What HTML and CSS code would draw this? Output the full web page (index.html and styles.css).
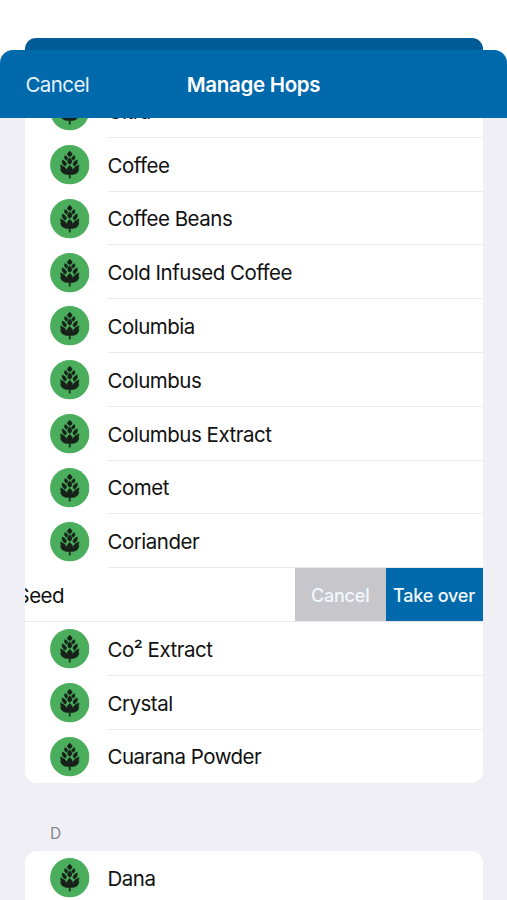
FILE: index.html
```html
<!DOCTYPE html>
<html lang="en">
<head>
<meta charset="utf-8">
<title>Manage Hops</title>
<link rel="stylesheet" href="styles.css">
</head>
<body>
<svg class="defs" width="0" height="0" aria-hidden="true">
  <symbol id="hop" viewBox="-20 -20 40 40">
    <circle r="19.9" fill="#4aae5c"/>
    <g fill="#17211a" stroke="#17211a" stroke-width=".45">
      <path d="M0-13.6C1.6-12.5 2.4-11.3 2.4-10.3Q2-8.7 0-8.1Q-2-8.7-2.4-10.3C-2.4-11.3-1.6-12.5 0-13.6Z"/>
      <path d="M0-7C1.6-5.7 2.4-4.2 2.2-2.9Q1.7-1.2 0-.4Q-1.7-1.2-2.2-2.9C-2.4-4.2-1.6-5.7 0-7Z"/>
      <path d="M-5-9.3Q-2.8-8.5-1.8-7Q-2.3-5.3-3.5-4.4Q-6.3-6.2-5-9.3Z"/>
      <path d="M-7.6-5Q-4.6-3.7-3.2-1.2Q-3.2.5-4.3 1.4Q-8.6-.4-7.6-5Z"/>
      <path d="M-9.4 0Q-5 1.5-3.4 4.6L-3.5 6Q-9.6 6-9.4 0Z"/>
      <path d="M5-9.3Q2.8-8.5 1.8-7Q2.3-5.3 3.5-4.4Q6.3-6.2 5-9.3Z"/>
      <path d="M7.6-5Q4.6-3.7 3.2-1.2Q3.2.5 4.3 1.4Q8.6-.4 7.6-5Z"/>
      <path d="M9.4 0Q5 1.5 3.4 4.6L3.5 6Q9.6 6 9.4 0Z"/>
      <path d="M0 .6Q3.2 3 2.7 5.6Q6 3.9 9.4 4Q8.8 9 3.5 9.8Q1.8 10.1.6 9.8V13.6H-.6V9.8Q-1.8 10.1-3.5 9.8Q-8.8 9-9.4 4Q-6 3.9-2.7 5.6Q-3.2 3 0 .6Z"/>
    </g>
  </symbol>
</svg>
<div class="backdrop-sheet"></div>
<div class="sheet">
  <header class="navbar">
    <span class="nav-cancel">Cancel</span>
    <h1 class="nav-title">Manage Hops</h1>
    <span></span>
  </header>
  <main class="content">
    <ul class="group group-c">
      <li class="row"><svg class="icon"><use href="#hop"/></svg><span class="label">Citra</span></li>
      <li class="row"><svg class="icon"><use href="#hop"/></svg><span class="label">Coffee</span></li>
      <li class="row"><svg class="icon"><use href="#hop"/></svg><span class="label">Coffee Beans</span></li>
      <li class="row"><svg class="icon"><use href="#hop"/></svg><span class="label">Cold Infused Coffee</span></li>
      <li class="row"><svg class="icon"><use href="#hop"/></svg><span class="label">Columbia</span></li>
      <li class="row"><svg class="icon"><use href="#hop"/></svg><span class="label">Columbus</span></li>
      <li class="row"><svg class="icon"><use href="#hop"/></svg><span class="label">Columbus Extract</span></li>
      <li class="row"><svg class="icon"><use href="#hop"/></svg><span class="label">Comet</span></li>
      <li class="row"><svg class="icon"><use href="#hop"/></svg><span class="label">Coriander</span></li>
      <li class="row swiped">
        <span class="swiped-label"><span>Seed</span></span>
        <span class="action action-cancel">Cancel</span>
        <span class="action action-take">Take over</span>
      </li>
      <li class="row"><svg class="icon"><use href="#hop"/></svg><span class="label">Co² Extract</span></li>
      <li class="row"><svg class="icon"><use href="#hop"/></svg><span class="label">Crystal</span></li>
      <li class="row"><svg class="icon"><use href="#hop"/></svg><span class="label">Cuarana Powder</span></li>
    </ul>
    <h2 class="section">D</h2>
    <ul class="group group-d">
      <li class="row"><svg class="icon"><use href="#hop"/></svg><span class="label">Dana</span></li>
    </ul>
  </main>
</div>
</body>
</html>
```
FILE: styles.css
```css
* { box-sizing: border-box; }
body {
  margin: 0;
  height: 900px;
  padding-top: 38px;
  overflow: hidden;
  display: flex;
  flex-direction: column;
  background: #fff;
  color: #111;
  font-family: Inter, "Liberation Sans", sans-serif;
  font-size: 20.5px;
  letter-spacing: -0.5px;
}
.defs { position: absolute; }
.backdrop-sheet {
  flex: none;
  height: 12px;
  margin: 0 24.5px;
  border-radius: 11px 11px 0 0;
  background: #005b96;
}
.sheet {
  flex: 1;
  min-height: 0;
  display: flex;
  flex-direction: column;
  border-radius: 13px 13px 0 0;
  overflow: hidden;
  background: #f0eff5;
}
.navbar {
  flex: none;
  height: 68.4px;
  padding: 0 25.5px;
  display: grid;
  grid-template-columns: 1fr auto 1fr;
  align-items: center;
  background: #0069ac;
  color: #fff;
}
.nav-cancel { color: #e6f3fc; letter-spacing: -0.6px; }
.nav-title { margin: 0; font-size: 20.5px; font-weight: 600; letter-spacing: -0.3px; }
.content { flex: 1; min-height: 0; overflow: hidden; padding: 0 24.5px 0 25px; }
.group {
  margin: 0;
  padding: 0;
  list-style: none;
  overflow: hidden;
  border-radius: 12px;
  background: #fff;
}
.group-c { margin-top: -34.4px; }
.group-d { border-radius: 12px 12px 0 0; }
.row {
  height: 53.8px;
  padding-left: 24.5px;
  display: flex;
  align-items: center;
}
.icon { flex: none; width: 39.5px; height: 39.5px; margin-right: 18.5px; overflow: visible; }
.label {
  flex: 1;
  align-self: stretch;
  display: flex;
  align-items: center;
  padding-top: 2px;
  border-bottom: 1px solid #e9e9eb;
  white-space: pre;
}
.row:last-child .label { border-bottom-color: transparent; }
.swiped { padding-left: 0; border-bottom: 1px solid #e9e9eb; }
.swiped-label { flex: 1; overflow: hidden; padding-top: 2px; }
.swiped-label span { margin-left: -8.5px; }
.action {
  align-self: stretch;
  display: flex;
  align-items: center;
  justify-content: center;
  padding-top: 1px;
  font-size: 18px;
  font-weight: 500;
  letter-spacing: -0.2px;
  color: #f2f8fd;
}
.action-cancel { width: 90.5px; background: #c6c6cb; }
.action-take { width: 97px; background: #0069ac; }
.section {
  margin: 0;
  height: 67.4px;
  padding: 40.5px 0 0 25px;
  font-size: 15.5px;
  line-height: 19px;
  font-weight: 400;
  color: #85858b;
}
```
